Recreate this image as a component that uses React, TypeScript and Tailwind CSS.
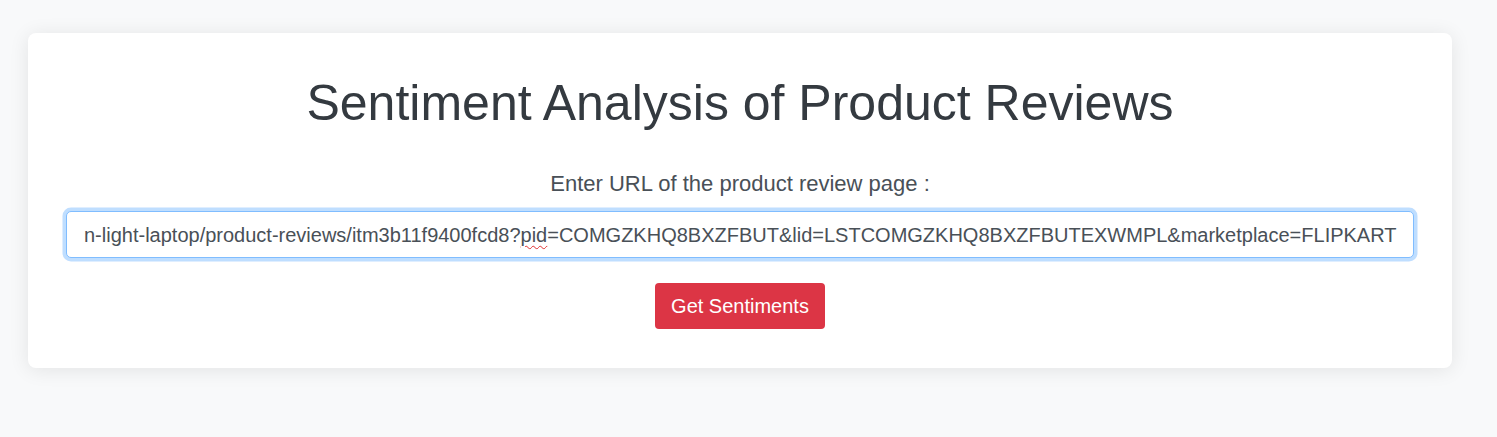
const App = () => {
  return (
    <div className="min-h-[437px] bg-[#f8f9fa] pt-[33px] pl-[28px] font-['Liberation_Sans',Arial,sans-serif]">
      <div className="w-[1424px] rounded-lg bg-white px-[38px] pt-[40px] pb-[39px] shadow-[0_2px_20px_rgba(0,0,0,0.09)]">
        <h1 className="text-center text-[50px] leading-[60px] text-[#343a40]">
          Sentiment Analysis of Product Reviews
        </h1>

        <p className="mt-[34px] text-center text-[22px] leading-[33px] text-[#495057]">
          Enter URL of the product review page :
        </p>

        <div className="mt-[11px] flex h-[47px] items-center overflow-hidden rounded-[5px] border border-[#80bdff] bg-white pl-[17px] shadow-[0_0_0_3.5px_rgba(0,123,255,0.25)]">
          <span className="whitespace-nowrap text-[20px] text-[#495057]">
            n-light-laptop/product-reviews/itm3b11f9400fcd8?
            <span className="underline decoration-[#e03030] decoration-wavy decoration-1 underline-offset-[3px]">pid</span>
            =COMGZKHQ8BXZFBUT&amp;lid=LSTCOMGZKHQ8BXZFBUTEXWMPL&amp;marketplace=FLIPKART
          </span>
        </div>

        <div className="mt-[25px] flex justify-center">
          <button className="h-[46px] w-[170px] rounded-[4px] bg-[#dc3545] text-[20px] text-white">
            Get Sentiments
          </button>
        </div>
      </div>
    </div>
  );
};

export default App;
